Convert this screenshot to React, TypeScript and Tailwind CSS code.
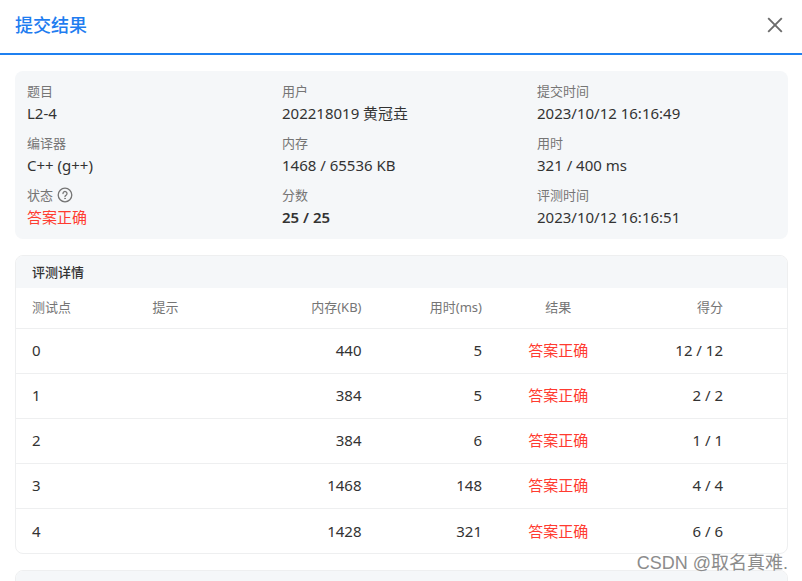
type Field = {
  label: string;
  value: string;
  tone?: 'normal' | 'bold' | 'accepted';
  help?: boolean;
};

type CaseRow = {
  id: number;
  memory: number;
  time: number;
  score: string;
};

const fields: Field[] = [
  { label: '题目', value: 'L2-4' },
  { label: '用户', value: '202218019 黄冠垚' },
  { label: '提交时间', value: '2023/10/12 16:16:49' },
  { label: '编译器', value: 'C++ (g++)' },
  { label: '内存', value: '1468 / 65536 KB' },
  { label: '用时', value: '321 / 400 ms' },
  { label: '状态', value: '答案正确', tone: 'accepted', help: true },
  { label: '分数', value: '25 / 25', tone: 'bold' },
  { label: '评测时间', value: '2023/10/12 16:16:51' },
];

const cases: CaseRow[] = [
  { id: 0, memory: 440, time: 5, score: '12 / 12' },
  { id: 1, memory: 384, time: 5, score: '2 / 2' },
  { id: 2, memory: 384, time: 6, score: '1 / 1' },
  { id: 3, memory: 1468, time: 148, score: '4 / 4' },
  { id: 4, memory: 1428, time: 321, score: '6 / 6' },
];

const tones = {
  normal: 'text-[#333333]',
  bold: 'font-semibold text-[#333333]',
  accepted: 'text-[#ff3b30]',
};

function HelpIcon() {
  return (
    <svg className="size-4" viewBox="0 0 16 16" fill="none" stroke="currentColor" strokeWidth="1.3" strokeLinecap="round">
      <circle cx="8" cy="8" r="6.8" />
      <path d="M6 6.5a2 2 0 1 1 3.2 1.6C8.400 8.600 8 8.900 8 9.500" />
      <circle cx="8" cy="11.500" r="0.400" fill="currentColor" strokeWidth="0.800" />
    </svg>
  );
}

function Header() {
  return (
    <header className="flex items-center justify-between border-b-2 border-[#1f80f0] pt-[11px] pr-[19px] pb-[14px] pl-[15px]">
      <h1 className="text-lg leading-[28px] font-medium text-[#1f7df0]">提交结果</h1>
      <button type="button" aria-label="关闭" className="text-[#6b6b6b]">
        <svg className="size-4" viewBox="0 0 16 16" fill="none" stroke="currentColor" strokeWidth="1.9">
          <path d="M1.200 1.200 14.800 14.800M14.800 1.200 1.200 14.800" />
        </svg>
      </button>
    </header>
  );
}

function Summary() {
  return (
    <dl className="grid grid-cols-3 gap-x-4 gap-y-2 rounded-lg bg-[#f5f7f9] px-3 py-[10px]">
      {fields.map((field) => (
        <div key={field.label}>
          <dt className="flex items-center gap-1 text-[13px] leading-5 text-[#757575]">
            {field.label}
            {field.help && (
              <button type="button" aria-label="状态说明">
                <HelpIcon />
              </button>
            )}
          </dt>
          <dd className={`text-[15px] leading-6 ${tones[field.tone ?? 'normal']}`}>{field.value}</dd>
        </div>
      ))}
    </dl>
  );
}

function Details() {
  return (
    <section className="overflow-hidden rounded-lg border border-[#eeeff0]">
      <h2 className="bg-[#f5f7f9] px-4 text-[13px] leading-8 font-medium text-[#333333]">评测详情</h2>
      <table className="w-full table-fixed text-[15px] text-[#333333]">
        <thead>
          <tr className="h-10 border-b border-[#eeeff0] text-[13px] text-[#757575]">
            <th className="px-4 text-left font-normal">测试点</th>
            <th className="px-4 text-left font-normal">提示</th>
            <th className="px-4 text-right font-normal">内存(KB)</th>
            <th className="px-4 text-right font-normal">用时(ms)</th>
            <th className="px-4 text-center font-normal">结果</th>
            <th className="px-4 text-right font-normal">得分</th>
            <td className="w-12" />
          </tr>
        </thead>
        <tbody>
          {cases.map((row) => (
            <tr key={row.id} className="h-[45px] border-b border-[#eeeff0] last:border-b-0">
              <td className="px-4">{row.id}</td>
              <td className="px-4" />
              <td className="px-4 text-right">{row.memory}</td>
              <td className="px-4 text-right">{row.time}</td>
              <td className="px-4 text-center text-[#ff3b30]">答案正确</td>
              <td className="px-4 text-right">{row.score}</td>
              <td />
            </tr>
          ))}
        </tbody>
      </table>
    </section>
  );
}

export default function App() {
  return (
    <div className="relative h-screen overflow-hidden bg-white font-['Noto_Sans','Noto_Sans_CJK_SC',sans-serif]">
      <Header />
      <main className="flex flex-col gap-4 pt-4 pr-[14px] pl-[15px]">
        <Summary />
        <Details />
        <section className="overflow-hidden rounded-lg border border-[#eeeff0]">
          <div className="h-8 bg-[#f5f7f9]" />
        </section>
      </main>
      <p className="absolute right-[14px] bottom-1 font-['Liberation_Sans','Noto_Sans_CJK_SC',sans-serif] text-lg leading-7 text-[#8c8c8c]">
        CSDN @取名真难.
      </p>
    </div>
  );
}
